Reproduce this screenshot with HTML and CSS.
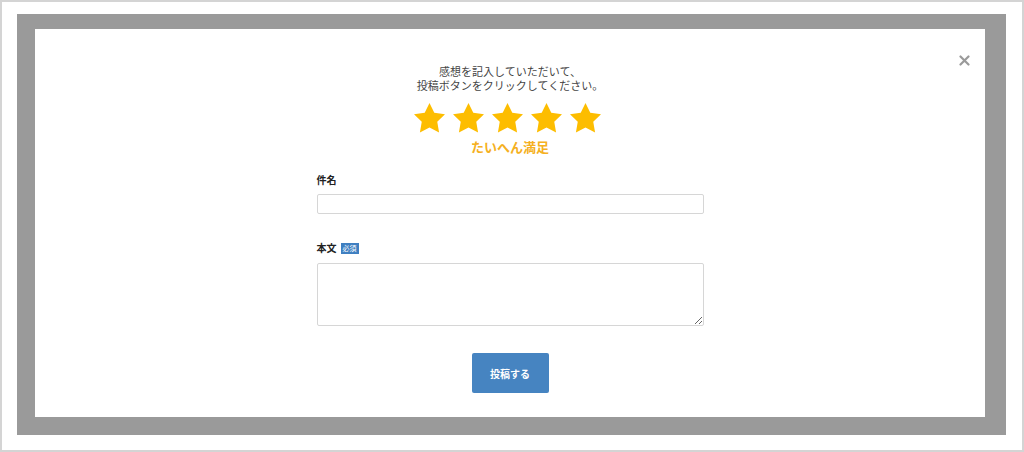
FILE: index.html
```html
<!DOCTYPE html>
<html lang="ja">
<head>
<meta charset="utf-8">
<link rel="stylesheet" href="styles.css">
</head>
<body>
<div class="frame">
  <div class="overlay">
    <div class="modal">
      <button class="close" aria-label="閉じる">
        <svg width="11" height="11" viewBox="0 0 11 11"><path d="M1.5 1.5L9.5 9.5M9.5 1.5L1.5 9.5" stroke="#9a9a9a" stroke-width="2.2" stroke-linecap="round"/></svg>
      </button>
      <p class="intro">感想を記入していただいて、<br>投稿ボタンをクリックしてください。</p>
      <div class="stars">
        <svg class="star" viewBox="2 2 20 19.02"><path d="M12 2l3.09 6.26L22 9.27l-5 4.87 1.18 6.88L12 17.770l-6.18 3.25L7 14.14 2 9.27l6.91-1.01L12 2z"/></svg>
        <svg class="star" viewBox="2 2 20 19.02"><path d="M12 2l3.09 6.26L22 9.27l-5 4.87 1.18 6.88L12 17.77l-6.18 3.25L7 14.14 2 9.27l6.91-1.01L12 2z"/></svg>
        <svg class="star" viewBox="2 2 20 19.02"><path d="M12 2l3.09 6.26L22 9.27l-5 4.87 1.18 6.88L12 17.77l-6.18 3.25L7 14.14 2 9.27l6.91-1.01L12 2z"/></svg>
        <svg class="star" viewBox="2 2 20 19.02"><path d="M12 2l3.09 6.26L22 9.27l-5 4.87 1.18 6.88L12 17.77l-6.18 3.25L7 14.14 2 9.27l6.91-1.01L12 2z"/></svg>
        <svg class="star" viewBox="2 2 20 19.02"><path d="M12 2l3.09 6.26L22 9.27l-5 4.87 1.18 6.88L12 17.77l-6.18 3.25L7 14.14 2 9.27l6.91-1.01L12 2z"/></svg>
      </div>
      <p class="rating">たいへん満足</p>
      <form class="form">
        <label class="label title-label">件名</label>
        <input class="input" type="text">
        <label class="label body-label">本文<span class="badge">必須</span></label>
        <textarea class="textarea"></textarea>
        <div class="actions"><button type="button" class="submit">投稿する</button></div>
      </form>
    </div>
  </div>
</div>
</body>
</html>
```
FILE: styles.css
```css
* { box-sizing: border-box; }
html, body { margin: 0; padding: 0; background: #fff; }
body { font-family: "Noto Sans CJK JP", "Noto Sans", sans-serif; color: #333; }

.frame {
  width: 1024px;
  height: 452px;
  border: 2px solid #d4d4d4;
  padding: 12px 16px 15px 15px;
  background: #fff;
}
.overlay {
  height: 421px;
  background: #9a9a9a;
  padding: 15px 21px 18px 18px;
}
.modal {
  position: relative;
  height: 388px;
  background: #fff;
  display: flex;
  flex-direction: column;
  align-items: center;
  padding-top: 35px;
}
.close {
  position: absolute;
  top: 26px;
  right: 15px;
  border: 0;
  background: none;
  padding: 0;
  width: 11px;
  height: 11px;
  display: block;
}
.close svg { display: block; }

.intro {
  margin: 0;
  font-size: 11px;
  line-height: 14px;
  text-align: center;
  color: #444;
}
.stars {
  display: flex;
  gap: 8px;
  margin-top: 11px;
  margin-left: -6px;
  height: 29px;
}
.star {
  width: 31px;
  height: 29.5px;
  fill: #fdbd00;
  display: block;
}
.rating {
  margin: 6px 0 0;
  font-size: 13px;
  line-height: 18px;
  font-weight: 700;
  color: #f5b021;
}

.form {
  width: 387px;
  margin-top: 17px;
  display: flex;
  flex-direction: column;
}
.label {
  font-size: 10px;
  line-height: 14px;
  font-weight: 700;
  color: #222;
  display: flex;
  align-items: center;
}
.title-label { margin-bottom: 7px; }
.input {
  height: 20px;
  border: 1px solid #d6d6d6;
  border-radius: 2px;
  background: #fff;
  margin: 0;
}
.body-label { margin-top: 27px; margin-bottom: 8px; }
.badge {
  margin-left: 4px;
  background: #3f7fc1;
  color: #fff;
  font-size: 7px;
  line-height: 11px;
  height: 11px;
  padding: 0 2px;
  font-weight: 400;
}
.textarea {
  height: 63px;
  border: 1px solid #d6d6d6;
  border-radius: 2px;
  margin: 0;
  resize: vertical;
  font-family: inherit;
}
.actions {
  display: flex;
  justify-content: center;
  margin-top: 27px;
}
.submit {
  width: 77px;
  height: 40px;
  border: 0;
  border-radius: 2px;
  background: #4684c1;
  color: #fff;
  font-family: inherit;
  font-size: 10px;
  font-weight: 700;
}
```
